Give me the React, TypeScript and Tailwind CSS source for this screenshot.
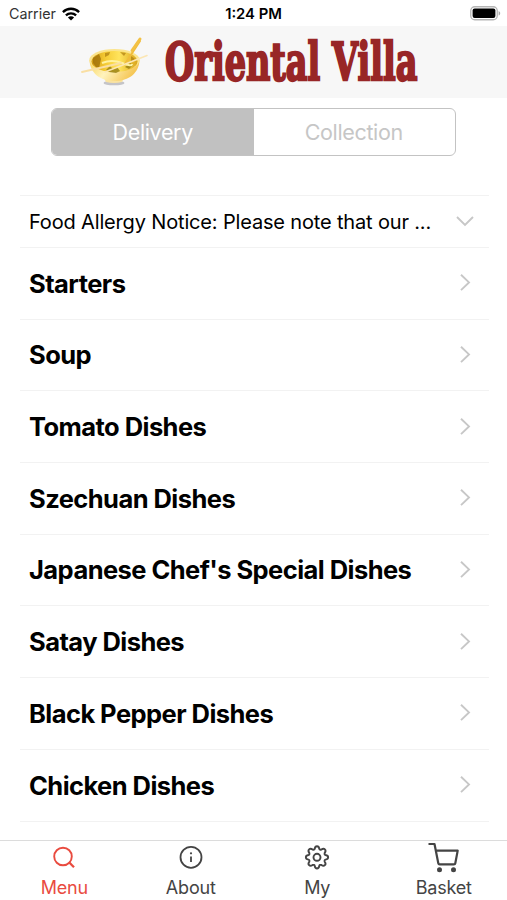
const categories = [
  "Starters",
  "Soup",
  "Tomato Dishes",
  "Szechuan Dishes",
  "Japanese Chef's Special Dishes",
  "Satay Dishes",
  "Black Pepper Dishes",
  "Chicken Dishes",
];

function WifiIcon() {
  return (
    <svg width="18" height="14" viewBox="0 0 18 14" fill="none" stroke="#000" strokeWidth="2.3">
      <path d="M0.9 5.1a11.5 11.5 0 0 1 16.2 0" />
      <path d="M3.9 8.4a7.3 7.3 0 0 1 10.2 0" />
      <path d="M9 13.6L5.9 10.5a4.4 4.4 0 0 1 6.2 0z" fill="#000" stroke="none" />
    </svg>
  );
}

function BatteryIcon() {
  return (
    <svg width="31" height="15" viewBox="0 0 31 15">
      <rect x="0.75" y="0.75" width="26.5" height="13" rx="4" fill="#fff" stroke="#b5b5b5" strokeWidth="1.3" />
      <rect x="2.6" y="2.6" width="22.8" height="9.3" rx="2" fill="#000" />
      <path d="M28.6 5v4.6c1-.4 1.6-1.3 1.6-2.3s-.6-1.9-1.6-2.3z" fill="#aaa" />
    </svg>
  );
}

function BowlLogo() {
  return (
    <svg width="70" height="52" viewBox="0 0 70 52">
      <defs>
        <linearGradient id="bowl" x1="0" x2="1" y1="0" y2="0.3">
          <stop offset="0" stopColor="#f9d458" />
          <stop offset="0.45" stopColor="#fff3bd" />
          <stop offset="1" stopColor="#f5c552" />
        </linearGradient>
        <linearGradient id="inside" x1="0" x2="1" y1="0" y2="0">
          <stop offset="0" stopColor="#cf9a12" />
          <stop offset="0.3" stopColor="#f5cb35" />
          <stop offset="0.6" stopColor="#ffe45c" />
          <stop offset="1" stopColor="#d9a51d" />
        </linearGradient>
      </defs>
      <ellipse cx="33" cy="47" rx="10.500" ry="2.300" fill="#c4c4c8" />
      <path d="M23 42h20l-2 4q-8 2-16 0z" fill="#fae3a0" />
      <path d="M8.500 24C9 37 19 45 33.500 45S58 37 58.500 24z" fill="url(#bowl)" />
      <ellipse cx="33.500" cy="24" rx="25.200" ry="11" fill="#fbe48d" />
      <ellipse cx="33.500" cy="25.500" rx="23" ry="10.600" fill="url(#inside)" />
      <path d="M12 22l6-4 2 5-2 9-3-1-3-4z" fill="#9c6d08" opacity=".75" />
      <path d="M24 17l5-1-1 3-4 2zM39 16l6 1-2 3zM50 20l4 3-4 3z" fill="#a8770b" opacity=".65" />
      <path d="M25 34l4-4 3 3 4-2 3 4-4 2-7-1zM44 31l5-4 3 2-4 4z" fill="#8f780f" opacity=".75" />
      <path d="M21 27q10-4 20 0t10 1" fill="none" stroke="#fff3a1" strokeWidth="2" />
      <path d="M44 28L59 5" stroke="#f0bc3a" strokeWidth="2" strokeLinecap="round" />
      <path d="M51 14.500L59 3" stroke="#f3c144" strokeWidth="3" strokeLinecap="round" />
      <path d="M1 36L40 27" stroke="#f9dfa4" strokeWidth="1.800" strokeLinecap="round" />
      <path d="M24 36L66 19.500" stroke="#fbe6b4" strokeWidth="1.600" strokeLinecap="round" />
    </svg>
  );
}

function ChevronDown() {
  return (
    <svg width="18" height="18" viewBox="0 0 18 18" fill="none" stroke="#c7c7c7" strokeWidth="1.9">
      <path d="M1 4l8 8 8-8" />
    </svg>
  );
}

function ChevronRight() {
  return (
    <svg width="18" height="18" viewBox="0 0 18 18" fill="none" stroke="#c7c7c7" strokeWidth="1.9">
      <path d="M5 0.700l8 7.700-8 7.700" />
    </svg>
  );
}

function SearchIcon() {
  return (
    <svg width="32" height="32" viewBox="0 0 32 32" fill="none" stroke="currentColor" strokeWidth="1.9">
      <circle cx="15" cy="15.500" r="8.800" />
      <path d="M21.300 21.500l4.700 4.700" strokeWidth="2.300" />
    </svg>
  );
}

function InfoIcon() {
  return (
    <svg width="32" height="32" viewBox="0 0 32 32" fill="none" stroke="currentColor" strokeWidth="1.8">
      <circle cx="16" cy="16.300" r="10.500" />
      <path d="M16 15.500v5.500" />
      <circle cx="16" cy="12.300" r="1.100" fill="currentColor" stroke="none" />
    </svg>
  );
}

function GearIcon() {
  return (
    <svg width="32" height="32" viewBox="0 0 32 32" fill="none" stroke="currentColor" strokeWidth="1.9" strokeLinejoin="round">
      <circle cx="16" cy="16.300" r="3.500" />
      <path d="M13.700 7.800C14.200 4.300 17.800 4.300 18.300 7.800Q18.600 9.100 20.400 8.600C23.200 6.500 25.800 9.100 23.700 11.900Q23.200 13.700 24.500 14C28 14.500 28 18.100 24.500 18.600Q23.200 18.900 23.700 20.700C25.800 23.500 23.200 26.100 20.400 24Q18.600 23.500 18.300 24.800C17.800 28.300 14.200 28.300 13.700 24.800Q13.400 23.500 11.600 24C8.800 26.100 6.200 23.500 8.300 20.700Q8.800 18.900 7.500 18.600C4 18.100 4 14.500 7.500 14Q8.800 13.700 8.300 11.900C6.200 9.100 8.800 6.500 11.600 8.600Q13.400 9.100 13.700 7.800z" />
    </svg>
  );
}

function CartIcon() {
  return (
    <svg width="32" height="32" viewBox="0 0 32 32" fill="none" stroke="currentColor" strokeWidth="2.2" strokeLinejoin="round">
      <path d="M0.500 3h6L10.300 22.300q.2 1 1.300 1h14.300q1.200 0 1.400-1.100L29.700 9.600H7.800" />
      <circle cx="11.500" cy="28.700" r="2.500" fill="currentColor" stroke="none" />
      <circle cx="25.500" cy="28.700" r="2.500" fill="currentColor" stroke="none" />
    </svg>
  );
}

const tabs = [
  { label: "Menu", icon: SearchIcon, color: "text-[#e94b3f]" },
  { label: "About", icon: InfoIcon, color: "text-[#444]" },
  { label: "My", icon: GearIcon, color: "text-[#444]" },
  { label: "Basket", icon: CartIcon, color: "text-[#444]" },
];

export default function App() {
  return (
    <div className="flex h-[900px] w-[507px] flex-col overflow-hidden bg-white font-['Inter',sans-serif] text-black">
      {/* Status bar */}
      <div className="grid h-[26px] shrink-0 grid-cols-3 items-center pr-1.5 pl-[9px] pt-px">
        <div className="flex items-center gap-1.5 text-[14.3px] text-[#333]">
          Carrier
          <WifiIcon />
        </div>
        <div className="pt-px pr-[3px] text-center text-[14.8px] font-semibold whitespace-nowrap">1:24 PM</div>
        <div className="flex justify-end">
          <BatteryIcon />
        </div>
      </div>

      {/* Brand header */}
      <header className="flex h-[72px] shrink-0 items-center bg-[#f7f7f7] pl-[81px]">
        <BowlLogo />
        <h1 className="ml-3.5 w-[252px] font-['DejaVu_Serif',serif] text-[52px] leading-[72px] font-bold whitespace-nowrap text-[#982626]">
          <span className="inline-block origin-left scale-x-[0.645] [-webkit-text-stroke:2.4px_#982626]">Oriental Villa</span>
        </h1>
      </header>

      <main className="min-h-0 flex-1 overflow-hidden">
        {/* Delivery / collection switch */}
        <div className="mx-auto mt-2.5 grid h-12 w-[405px] grid-cols-2 overflow-hidden rounded-md border border-[#c3c3c3] text-[21.5px] tracking-[-0.35px]">
          <button className="bg-[#c1c1c1] text-white">Delivery</button>
          <button className="pr-px text-[#c6c6c6]">Collection</button>
        </div>

        <div className="ml-5 mr-[18px] mt-[39px] border-t border-[#f2f2f2]">
          <div className="flex h-[52px] items-center justify-between border-b border-[#f2f2f2] pr-[15px] pl-[9px]">
            <span className="pt-px text-[20px] tracking-[-0.16px] whitespace-nowrap">Food Allergy Notice: Please note that our ...</span>
            <ChevronDown />
          </div>
          {categories.map((name) => (
            <div key={name} className="flex h-[71.7px] items-center justify-between border-b border-[#f2f2f2] pr-[15px] pl-[9px]">
              <span className="pt-px text-[25.500px] tracking-[-0.55px] font-bold whitespace-nowrap">{name}</span>
              <ChevronRight />
            </div>
          ))}
        </div>
      </main>

      {/* Tab bar */}
      <nav className="grid h-[60px] shrink-0 grid-cols-4 border-t border-[#dcdcdc] bg-white pl-px">
        {tabs.map(({ label, icon: Icon, color }) => (
          <div key={label} className={`flex flex-col items-center ${color}`}>
            <Icon />
            <span className="mt-[3px] text-[18px] leading-6 tracking-[-0.2px]">{label}</span>
          </div>
        ))}
      </nav>
    </div>
  );
}
